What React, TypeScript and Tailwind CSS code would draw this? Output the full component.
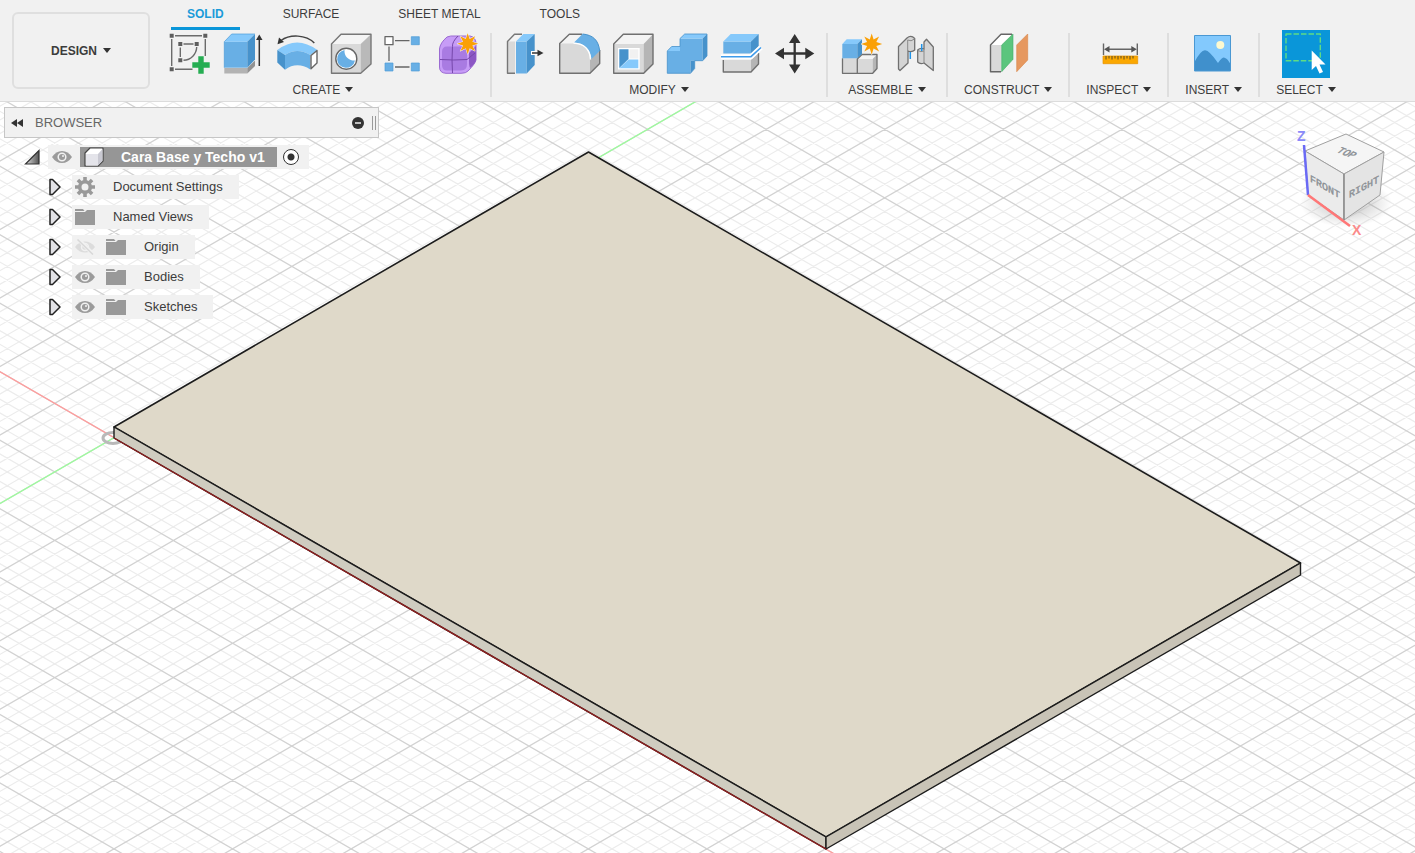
import type { ReactNode } from 'react';
import clsx from 'clsx';

const Icon = ({ children }: { children: ReactNode }) => (
  <svg viewBox="0 0 48 48" className="size-12 shrink-0 overflow-visible" fill="none" strokeLinejoin="round" aria-hidden="true">
    {children}
  </svg>
);

const Star = ({ cx, cy }: { cx: number; cy: number }) => {
  const points = Array.from({ length: 16 }, (_, i) => {
    const r = i % 2 ? 5 : 10.5;
    const a = (i * Math.PI) / 8;
    return `${cx + r * Math.sin(a)},${cy - r * Math.cos(a)}`;
  }).join(' ');
  return <polygon points={points} fill="#faa005" stroke="#f1f1f1" strokeWidth="1" paintOrder="stroke" />;
};

const SketchIcon = () => (
  <Icon>
    <path d="M11 5.7H38M7.7 9V36M41.3 9V26M11 39.3H28.500M19.500 14H29.500M16.300 17.500V27M32.700 17C32.500 24 27 30 19.500 30.300" stroke="#6b6b6b" strokeWidth="1.4" />
    <path d="M5.700 3.700h4v4h-4zM39.300 3.700h4v4h-4zM5.700 37.300h4v4h-4zM14.300 12h4v4h-4zM30.700 12h4v4h-4zM14.300 28.300h4v4h-4z" fill="#5e5e5e" />
    <path d="M34.300 26.300h5.400v6h6v5.400h-6v6h-5.400v-6h-6v-5.400h6z" fill="#25ad52" />
  </Icon>
);

const ExtrudeIcon = () => (
  <Icon>
    <path d="M6.300 38H29.300V43.500H6.300z" fill="#b3b3b3" />
    <path d="M29.300 38L37 30.500V36L29.300 43.500z" fill="#929292" />
    <path d="M6.300 11.700H29.300V37.700H6.300z" fill="#68afe5" />
    <path d="M6.300 11.700L13.700 4H37L29.300 11.700z" fill="#86c9fb" />
    <path d="M29.300 11.700L37 4V29.500L29.300 37.700z" fill="#4792cb" />
    <path d="M6.300 37.700V11.700L13.700 4H37" stroke="#4b9bd8" strokeWidth=".7" />
    <path d="M41.300 36V9" stroke="#333" strokeWidth="1.500" />
    <path d="M41.300 4.500L44.500 10H38z" fill="#333" />
  </Icon>
);

const RevolveIcon = () => (
  <Icon>
    <path d="M42.300 13C34 4.500 18 4 9 10.500" stroke="#444" strokeWidth="1.500" />
    <path d="M5.500 14.300L7 7.500L12 12z" fill="#333" />
    <path d="M5.300 20Q25 5 45.300 20L38.300 25Q25 17 13 25z" fill="#86c9fb" />
    <path d="M13 25Q25 17 38.300 25V39.500Q25 31 13 39.700z" fill="#68afe5" />
    <path d="M5.300 20L13 25V39.700L5.300 32.500z" fill="#4792cb" />
    <path d="M45 20.500L39 25.500V38.700L45 33z" fill="#fff" stroke="#666" strokeWidth="1.400" />
  </Icon>
);

const HoleIcon = () => (
  <Icon>
    <path d="M5.500 14L15 4.300H45L34.700 14z" fill="#f4f4f4" />
    <path d="M5.500 14H34.700V43.300H5.500z" fill="#d9d9d9" />
    <path d="M34.700 14L45 4.300V34L34.700 43.300z" fill="#b9b9b9" />
    <path d="M5.500 14L15 4.300H45V34L34.700 43.300H5.500z" stroke="#777" strokeWidth="1.400" />
    <circle cx="20.300" cy="28.700" r="10.500" fill="#fff" stroke="#666" strokeWidth="1.400" />
    <path d="M18.500 20A9 9 0 1 0 29 30.500A9.500 9.500 0 0 1 18.500 20z" fill="#68afe5" />
  </Icon>
);

const PatternIcon = () => (
  <Icon>
    <path d="M15 10.700H29.500M9 16.500V31M15 37H29.500" stroke="#666" strokeWidth="1.300" />
    <path d="M5 6.700h8v8h-8z" fill="#fff" stroke="#666" strokeWidth="1.300" />
    <path d="M31.300 6.700h8v8h-8zM5 33h8v8h-8zM31.300 33h8v8h-8z" fill="#68afe5" stroke="#4e9cd7" strokeWidth=".7" />
  </Icon>
);

const FormIcon = () => (
  <Icon>
    <path d="M5.500 19Q6 13 13 7Q16 5.500 22 6H36Q42 7 42 14V30Q41 34 34 41Q32 43.300 27 43.300H12Q5.500 43 5.500 37z" fill="#c79cf7" stroke="#9b6bd2" strokeWidth="1" />
    <path d="M35 23L42 16V30Q41 34 36 38Q35 36 35 30z" fill="#8c57c4" />
    <path d="M8 22Q8 16.500 13 16.500H27Q33 16.500 33 22V34Q33 40.500 27 40.500H13Q8 40.500 8 35z" fill="#a97be2" />
    <path d="M6 29.500Q20 30.500 33 29.500L41 23M18.500 16.500Q17.500 30 18.500 43M18.500 16.500Q18 12 24 6" stroke="#7648ab" strokeWidth="1" />
    <Star cx={33.7} cy={13.7} />
  </Icon>
);

const PressPullIcon = () => (
  <Icon>
    <path d="M7.500 11.500L14.500 4.300H22L15 11.500V43H7.500z" fill="#f4f4f4" />
    <path d="M7.500 11.500H15V43H7.500z" fill="#d9d9d9" />
    <path d="M22 4.300H14.500L7.500 11.500V43.300H15" stroke="#777" strokeWidth="1.400" />
    <path d="M16 11.500H26.700V43.500H16z" fill="#68afe5" />
    <path d="M16 11.500L23.300 4H34.700L26.700 11.500z" fill="#86c9fb" />
    <path d="M26.700 11.500L34.700 4V35L26.700 43.500z" fill="#4792cb" />
    <path d="M31 23H40" stroke="#fff" strokeWidth="4" />
    <path d="M32 23H40" stroke="#333" strokeWidth="1.500" />
    <path d="M43.500 23L37.500 19.700V26.300z" fill="#333" />
  </Icon>
);

const FilletIcon = () => (
  <Icon>
    <path d="M5.700 13.500L15.300 4.300H28L20 13.500z" fill="#f4f4f4" />
    <path d="M5.700 13.500H20Q35 14 36 29.500V43.300H5.700z" fill="#d9d9d9" />
    <path d="M36 29.500L45.700 20.500V33.500L36 43.300z" fill="#b5b5b5" />
    <path d="M28 4.300H15.300L5.700 13.500V43.300H36L45.700 33.500V20" stroke="#707070" strokeWidth="1.400" />
    <path d="M20 12.500L28.500 4C39 5 44.500 10 45.700 21L37.500 29Q36 14 20 12.500z" fill="#68afe5" />
    <path d="M28.500 4C39 5 44.500 10 45.700 21" stroke="#4792cb" />
    <path d="M19.500 13.200Q35.500 14 36.500 29.500" stroke="#fff" strokeWidth="1.300" />
  </Icon>
);

const ShellIcon = () => (
  <Icon>
    <path d="M5.700 14L15.300 4.300H45L35.700 14z" fill="#f4f4f4" />
    <path d="M5.700 14H35.700V43.300H5.700z" fill="#d9d9d9" />
    <path d="M35.700 14L45 4.300V34L35.700 43.300z" fill="#b5b5b5" />
    <path d="M5.700 14L15.300 4.300H45V34L35.700 43.300H5.700z" stroke="#707070" strokeWidth="1.400" />
    <path d="M10 18H31.700V39.500H10z" fill="#fff" />
    <path d="M11.300 19.300H20.500V29L11.300 38z" fill="#4792cb" />
    <path d="M11.300 38.300L20.500 29.500H30.300V38.300z" fill="#86c9fb" />
    <path d="M21.500 19.300H30.300V28.500H21.500z" fill="#f1f1f1" />
  </Icon>
);

const CombineIcon = () => (
  <Icon>
    <path d="M5.300 21H18V8.500H40.700V30.700H28.500V43.300H5.300z" fill="#68afe5" />
    <path d="M5.300 21L9.700 16.500H18V21zM18 8.500L22.700 4H45L40.700 8.500z" fill="#86c9fb" />
    <path d="M40.700 8.500L45 4V26L40.700 30.700zM28.500 30.700H32.700V38.500L28.500 43.300z" fill="#4792cb" />
    <path d="M5.300 43.300V21L9.700 16.500H18V8.500L22.700 4H45V26L40.700 30.700H32.700V38.500L28.500 43.300z" stroke="#4792cb" strokeWidth=".8" />
  </Icon>
);

const SplitIcon = () => (
  <Icon>
    <path d="M7.300 30H35L42.500 23V34L35 42H7.300z" fill="#d9d9d9" />
    <path d="M35 30L42.500 23V34L35 42z" fill="#b5b5b5" />
    <path d="M7.300 30V42H35L42.500 34V23" stroke="#707070" strokeWidth="1.400" />
    <path d="M7.300 11.500H35V23.500H7.300z" fill="#68afe5" />
    <path d="M7.300 11.500L14.700 4H42.700L35 11.500z" fill="#86c9fb" />
    <path d="M35 11.500L42.700 4V16L35 23.500z" fill="#4792cb" />
    <path d="M5 26.700H35L45 17.500" stroke="#fff" strokeWidth="5" />
    <path d="M5 26.700H35L45 17.500" stroke="#3f9bea" strokeWidth="1.600" />
  </Icon>
);

const MoveIcon = () => (
  <Icon>
    <path d="M24.700 10V37M11 23.500H38" stroke="#333" strokeWidth="2.300" />
    <path d="M24.700 4L30.500 13H19zM24.700 43.500L30.500 34.500H19zM5 23.500L14 17.700V29.300zM44.300 23.500L35.300 17.700V29.300z" fill="#333" />
  </Icon>
);

const NewComponentIcon = () => (
  <Icon>
    <path d="M6.500 28.300H21.300V43.300H6.500zM21.300 29H36.700V43.300H21.300z" fill="#d9d9d9" />
    <path d="M21.300 29L26 24.500H41L36.700 29z" fill="#f4f4f4" />
    <path d="M36.700 29L41 24.500V38.500L36.700 43.300z" fill="#b5b5b5" />
    <path d="M6.500 28.300V43.300H36.700L41 38.500V24.500H26L21.300 29V43" stroke="#707070" strokeWidth="1.300" />
    <path d="M6.300 14H21.300V28.300H6.300z" fill="#68afe5" />
    <path d="M6.300 14L10.700 9.300H26L21.300 14z" fill="#86c9fb" />
    <path d="M21.300 14L26 9.300V24L21.300 28.300z" fill="#4792cb" />
    <Star cx={35.7} cy={14} />
  </Icon>
);

const JointIcon = () => (
  <Icon>
    <path d="M8.500 16.500L17 8Q21 4.500 24.700 8.500V20Q22 22.500 18 21V33L10 40.500L8.500 39z" fill="#d4d4d4" stroke="#707070" strokeWidth="1.300" />
    <path d="M17.700 21V10Q21 12 24.500 9" stroke="#8a8a8a" />
    <path d="M34 19V12L36.500 9.300L43.300 17V40.500L34 33Q30 34.500 27.700 32V20Q30.500 17.500 34 19z" fill="#d4d4d4" stroke="#707070" strokeWidth="1.300" />
    <path d="M34 19V33M27.700 20.500Q31 22.500 34 21" stroke="#8a8a8a" />
    <path d="M20.300 22V29M31.700 14V21" stroke="#1f93e8" strokeWidth="1.500" />
  </Icon>
);

const ConstructIcon = () => (
  <Icon>
    <path d="M6.500 15L17 4.300H28L17.300 15z" fill="#fff" />
    <path d="M6.500 15H17.300V41.700H6.500z" fill="#d9d9d9" />
    <path d="M28 4.300H17L6.500 15V41.700H17" stroke="#666" strokeWidth="1.400" />
    <path d="M17.700 15L29 4V29.300L17.700 41.700z" fill="#5bc57d" stroke="#45ad68" strokeWidth=".6" />
    <path d="M32.700 15L43.700 4V30L32.700 41.700z" fill="#e6985f" stroke="#d88546" strokeWidth=".6" />
  </Icon>
);

const MeasureIcon = () => (
  <Icon>
    <path d="M8 26H42.700V33.700H8z" fill="#fba800" stroke="#e79200" strokeWidth=".7" />
    <path d="M11 26v3.500M14 26v2.500M17 26v3.500M20 26v2.500M23 26v3.500M26 26v2.500M29 26v3.500M32 26v2.500M35 26v3.500M38 26v2.500" stroke="#5b4a20" strokeWidth="1" />
    <path d="M8.500 13.500V25M42.300 13.500V25M12 19.300H39" stroke="#666" strokeWidth="1.400" />
    <path d="M9 19.300L14.500 16V22.600zM41.800 19.300L36.300 16V22.600z" fill="#555" />
  </Icon>
);

const InsertIcon = () => (
  <Icon>
    <path d="M4.500 5.500H40.500V41H4.500z" fill="#83c9fd" />
    <path d="M4.500 32Q11 20 15 20.300Q19 20 28 33Q33 26 35 28Q37 28 40.500 34V41H4.500z" fill="#4090cc" />
    <circle cx="30.300" cy="15" r="4" fill="#fdf9cf" />
    <path d="M4.500 5.500H40.500V41H4.500z" stroke="#4a98d3" strokeWidth="1" />
  </Icon>
);

const SelectIcon = () => (
  <Icon>
    <path d="M4 4H38.300V30.700H4z" stroke="#5fdc85" strokeWidth="1.400" strokeDasharray="5.500 2" />
    <path d="M29.700 20.500V40L34 36L37.500 43.500L41 42L37.500 34.500H43.500z" fill="#fff" />
  </Icon>
);

const Caret = () => (
  <svg viewBox="0 0 8 5" className="h-[5px] w-2" aria-hidden="true">
    <path d="M0 0H8L4 5z" fill="#333" />
  </svg>
);

const groups = [
  {
    label: 'CREATE',
    tools: [
      { name: 'Create Sketch', icon: <SketchIcon /> },
      { name: 'Extrude', icon: <ExtrudeIcon /> },
      { name: 'Revolve', icon: <RevolveIcon /> },
      { name: 'Hole', icon: <HoleIcon /> },
      { name: 'Rectangular Pattern', icon: <PatternIcon /> },
      { name: 'Create Form', icon: <FormIcon /> },
    ],
  },
  {
    label: 'MODIFY',
    tools: [
      { name: 'Press Pull', icon: <PressPullIcon /> },
      { name: 'Fillet', icon: <FilletIcon /> },
      { name: 'Shell', icon: <ShellIcon /> },
      { name: 'Combine', icon: <CombineIcon /> },
      { name: 'Split Body', icon: <SplitIcon /> },
      { name: 'Move/Copy', icon: <MoveIcon /> },
    ],
  },
  {
    label: 'ASSEMBLE',
    tools: [
      { name: 'New Component', icon: <NewComponentIcon /> },
      { name: 'Joint', icon: <JointIcon /> },
    ],
  },
  { label: 'CONSTRUCT', tools: [{ name: 'Offset Plane', icon: <ConstructIcon /> }] },
  { label: 'INSPECT', tools: [{ name: 'Measure', icon: <MeasureIcon /> }] },
  { label: 'INSERT', tools: [{ name: 'Canvas', icon: <InsertIcon /> }] },
  { label: 'SELECT', tools: [{ name: 'Window Selection', icon: <SelectIcon />, active: true }] },
];

const tabs = ['SOLID', 'SURFACE', 'SHEET METAL', 'TOOLS'];

const Toolbar = () => (
  <header className="relative z-10 flex shrink-0 border-b border-[#dcdcdc] bg-[#f1f1f1] text-xs text-[#3c3c3c]">
    <button className="mx-3 my-3 flex w-[138px] shrink-0 items-center justify-center gap-1.5 rounded-md border-2 border-[#dfdfdf] font-bold">
      DESIGN <Caret />
    </button>
    <div className="-ml-1.5">
      <nav className="flex gap-[27px] pl-[15px]" aria-label="Workspace tabs">
        {tabs.map((tab, i) => (
          <button
            key={tab}
            className={clsx(
              'h-[30px] border-b-3 px-4',
              i === 0 ? 'border-[#0a96d9] font-bold text-[#1b9bd9]' : 'border-transparent',
            )}
          >
            {tab}
          </button>
        ))}
      </nav>
      <div className="flex">
        {groups.map((group, i) => (
          <div key={group.label} className="flex">
            {i > 0 && <div className="mt-[3px] h-16 w-0.5 bg-[#dedede]" />}
            <div className="flex flex-col items-center px-[5px]">
              <div className="flex">
                {group.tools.map((tool) => (
                  <div key={tool.name} className="px-[3px]">
                    <button aria-label={tool.name} className={clsx('block', 'active' in tool && 'bg-[#0a96d9]')}>
                      {tool.icon}
                    </button>
                  </div>
                ))}
              </div>
              <button className="flex h-[23px] items-center gap-[5px] px-[11px]">
                {group.label} <Caret />
              </button>
            </div>
          </div>
        ))}
      </div>
    </div>
  </header>
);

const EyeIcon = () => (
  <svg viewBox="0 0 20 14" className="h-3.5 w-5" aria-hidden="true">
    <path d="M0 7Q4 1 10 1T20 7Q16 13 10 13T0 7z" fill="#9b9b9b" />
    <circle cx="10" cy="7" r="3.800" fill="none" stroke="#f1f1f1" strokeWidth="1.500" />
    <circle cx="11" cy="6" r="1" fill="#f1f1f1" />
  </svg>
);

const HiddenEyeIcon = () => (
  <svg viewBox="0 0 20 16" className="h-4 w-5" fill="none" aria-hidden="true">
    <path d="M0 8Q4 2.500 10 2.500T20 8Q16 13.500 10 13.500T0 8z" fill="#dcdcdc" />
    <circle cx="10" cy="8" r="3.500" stroke="#f1f1f1" strokeWidth="1.500" />
    <path d="M3 0L19 16" stroke="#f1f1f1" strokeWidth="4" />
    <path d="M2.500 .5L18 15.500" stroke="#d8d8d8" strokeWidth="1.500" />
  </svg>
);

const FolderIcon = () => (
  <svg viewBox="0 0 20 16" className="h-4 w-5" aria-hidden="true">
    <path d="M0 0H8L9.500 2H0zM0 3H10L12 1H20V16H0z" fill="#999" />
  </svg>
);

const GearIcon = () => (
  <svg viewBox="-10 -10 20 20" className="size-5" fill="none" stroke="#999" aria-hidden="true">
    <circle r="5.300" strokeWidth="3.600" />
    {[0, 45, 90, 135].map((angle) => (
      <path key={angle} d="M0 -10V-6M0 6V10" strokeWidth="3.600" transform={`rotate(${angle})`} />
    ))}
  </svg>
);

const ComponentIcon = () => (
  <svg viewBox="0 0 20 20" className="size-5" strokeLinejoin="round" aria-hidden="true">
    <path d="M1 6L6 1H19V14L14 19H1z" fill="#fff" stroke="#444" strokeWidth="1.200" />
    <path d="M2 7H14V18.500H2z" fill="#e4e4ea" />
    <path d="M14 7L18.500 2V14L14 18.500z" fill="#c9c9d2" />
  </svg>
);

const ExpandArrow = () => (
  <svg viewBox="0 0 12 18" className="h-[18px] w-3" aria-hidden="true">
    <path d="M1 1.500H3.500L11 9L3.500 16.500H1z" fill="#e2e2e6" stroke="#222" strokeWidth="1.500" strokeLinejoin="round" />
  </svg>
);

const nodes = [
  { label: 'Document Settings', icon: <GearIcon /> },
  { label: 'Named Views', icon: <FolderIcon /> },
  { label: 'Origin', icon: <FolderIcon />, eye: <HiddenEyeIcon /> },
  { label: 'Bodies', icon: <FolderIcon />, eye: <EyeIcon /> },
  { label: 'Sketches', icon: <FolderIcon />, eye: <EyeIcon /> },
];

const Browser = () => (
  <aside className="relative w-[375px] text-[13px] text-[#3c3c3c]">
    <div className="flex h-[31px] items-center border border-[#c6c6c6] bg-[#f1f1f1] pl-1.5">
      <button aria-label="Collapse browser">
        <svg viewBox="0 0 12 8" className="h-2 w-3" aria-hidden="true">
          <path d="M6 0V8L0 4zM12 0V8L6 4z" fill="#333" />
        </svg>
      </button>
      <h2 className="ml-3 flex-1 text-[#666]">BROWSER</h2>
      <button aria-label="Minimize">
        <svg viewBox="0 0 12 12" className="size-3" aria-hidden="true">
          <circle cx="6" cy="6" r="6" fill="#333" />
          <path d="M3 6H9" stroke="#f1f1f1" strokeWidth="1.500" />
        </svg>
      </button>
      <div className="mr-0.5 ml-2 h-3.5 w-1 border-x border-[#999]" />
    </div>
    <ul className="mt-1">
      <li className="flex h-[30px] items-center pl-5">
        <button aria-label="Collapse Cara Base y Techo v1">
          <svg viewBox="0 0 16 16" className="size-4" aria-hidden="true">
            <defs>
              <linearGradient id="fold">
                <stop offset="0" stopColor="#ddd" />
                <stop offset="1" stopColor="#555" />
              </linearGradient>
            </defs>
            <path d="M1.500 15L15 1.500V15z" fill="url(#fold)" stroke="#333" strokeWidth="1.200" />
          </svg>
        </button>
        <div className="ml-2 flex h-6 items-center bg-[#f1f1f1] pr-2.5 pl-1">
          <button aria-label="Toggle visibility">
            <EyeIcon />
          </button>
          <div className="ml-2 flex h-5 items-center gap-[17px] bg-[#969696] pr-3 pl-1 text-sm font-bold text-white">
            <ComponentIcon />
            Cara Base y Techo v1
          </div>
          <input
            type="radio"
            name="active-component"
            aria-label="Activate component"
            defaultChecked
            className="ml-1.5 size-4 appearance-none rounded-full border-[1px] border-[#333] bg-[radial-gradient(circle,#333_3px,#fff_4px)]"
          />
        </div>
      </li>
      {nodes.map((node) => (
        <li key={node.label} className="flex h-[30px] items-center pl-[45px]">
          <button aria-label={`Expand ${node.label}`}>
            <ExpandArrow />
          </button>
          <div className="ml-[11px] flex h-6 items-center bg-[#f1f1f1] pr-4 pl-[3px]">
            {node.eye && (
              <button aria-label={`Toggle ${node.label}`} className="mr-[11px]">
                {node.eye}
              </button>
            )}
            {node.icon}
            <span className="ml-[18px]">{node.label}</span>
          </div>
        </li>
      ))}
    </ul>
  </aside>
);

// isometric ground grid around the model origin
const ORIGIN = { x: 114, y: 437.7 };
const SLOPE = 0.5779;
const STEP = 13.705;

const gridPath = (major: boolean) => {
  let d = '';
  for (let k = -120; k <= 120; k++) {
    if ((k % 5 === 0) !== major) continue;
    const y = ORIGIN.y + k * STEP;
    const left = (-200 - ORIGIN.x) * SLOPE;
    const right = (1615 - ORIGIN.x) * SLOPE;
    d += `M-200 ${y + left}L1615 ${y + right}M-200 ${y - left}L1615 ${y - right}`;
  }
  return d;
};

const Viewport = () => (
  <svg
    viewBox="0 102 1415 751"
    preserveAspectRatio="xMidYMid slice"
    className="absolute inset-0 size-full"
    fill="none"
    role="img"
    aria-label="Model viewport"
  >
    <path d={gridPath(false)} stroke="#ececec" strokeWidth="1.200" />
    <path d={gridPath(true)} stroke="#d2d2d2" strokeWidth="1.300" />
    <path d="M-86 322L914 900" stroke="#ff9c9c" strokeWidth="1.300" />
    <path d="M-86 553.300L814 33.200" stroke="#9dfb9d" strokeWidth="1.300" />
    <ellipse cx="113" cy="438" rx="10" ry="5.500" stroke="#b9b9b9" strokeWidth="3" />
    <g strokeLinejoin="round">
      <path d="M588.500 152L1300.500 563L826 837L114 427z" fill="#dfd9c9" stroke="#1c1c1c" strokeWidth="1.600" />
      <path d="M114 427L826 837V849L114 438z" fill="#cfccc0" stroke="#1c1c1c" strokeWidth="1.400" />
      <path d="M1300.500 563V575L826 849V837z" fill="#c8c3b6" stroke="#1c1c1c" strokeWidth="1.400" />
      <path d="M114 438L826 849" stroke="#8c1f1f" strokeWidth="1.400" />
    </g>
  </svg>
);

const ViewCube = () => (
  <svg
    viewBox="0 0 135 135"
    className="absolute top-[13px] right-0 size-[135px]"
    role="img"
    aria-label="View cube"
  >
    <defs>
      <radialGradient id="cube-shadow">
        <stop offset="0" stopColor="#888" stopOpacity=".55" />
        <stop offset="1" stopColor="#888" stopOpacity="0" />
      </radialGradient>
    </defs>
    <ellipse cx="66" cy="88" rx="46" ry="24" fill="url(#cube-shadow)" />
    <g stroke="#a0a0a0" strokeWidth="1" strokeLinejoin="round">
      <path d="M25 36L66 19L104 37L64 59z" fill="#f5f5f5" />
      <path d="M25 36L64 59V105L28 80z" fill="#ebebeb" />
      <path d="M64 59L104 37L100 80L64 105z" fill="#e4e4e4" />
    </g>
    <path d="M64 59V105" stroke="#777" />
    <g
      className="font-['Liberation_Mono',monospace]"
      fontSize="10"
      fill="#8a8f94"
      stroke="#8a8f94"
      strokeWidth=".4"
      textAnchor="middle"
    >
      <text transform="translate(64 40) rotate(22) skewX(-28)">TOP</text>
      <text transform="translate(45 75) skewY(30)">FRONT</text>
      <text transform="translate(84 75) skewY(-28)">RIGHT</text>
    </g>
    <path d="M24 30L28 80" stroke="#6a6af5" strokeWidth="2.500" />
    <path d="M28 80L70 111" stroke="#f77" strokeWidth="2.500" />
    <g className="font-['Liberation_Sans',sans-serif]" fontSize="14" fontWeight="bold">
      <text x="17" y="26" fill="#8a8af8">Z</text>
      <text x="72" y="120" fill="#fb8a8a">X</text>
    </g>
  </svg>
);

export default function App() {
  return (
    <div className="flex h-screen flex-col overflow-hidden bg-white font-['Liberation_Sans',Arial,sans-serif]">
      <Toolbar />
      <main className="relative flex-1 pt-[5px] pl-1">
        <Viewport />
        <Browser />
        <ViewCube />
      </main>
    </div>
  );
}
